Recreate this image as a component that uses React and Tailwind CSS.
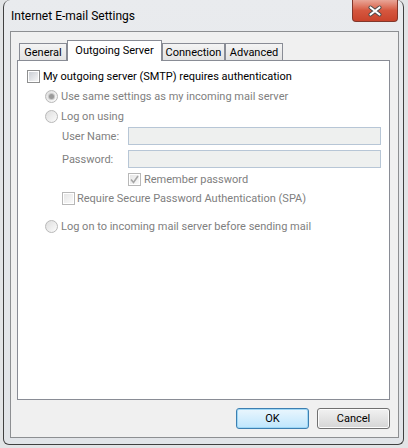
import React from 'react';

const font = { fontFamily: 'Roboto, "Liberation Sans", sans-serif' };

const CheckBox = ({ checked, disabled }) => (
  <span
    className={`flex h-[13px] w-[13px] shrink-0 items-center justify-center border ${
      disabled ? 'border-[#b8b8b8]' : 'border-[#8e8f8f]'
    } bg-white p-[1px]`}
  >
    <span
      className={`flex h-full w-full items-center justify-center ${
        disabled ? 'bg-gradient-to-br from-[#e6e6e6] to-[#fafafa]' : 'bg-gradient-to-br from-[#cbcfd5] to-[#f6f6f6]'
      }`}
    >
      {checked && (
        <svg width="9" height="9" viewBox="0 0 9 9">
          <path d="M1 4.5 L3.5 7.5 L8 1" fill="none" stroke="#a6a6a6" strokeWidth="1.6" />
        </svg>
      )}
    </span>
  </span>
);

const Radio = ({ checked }) => (
  <span className="flex h-[13px] w-[13px] shrink-0 items-center justify-center rounded-full border border-[#b9b9b9] bg-gradient-to-br from-[#dedede] to-[#fbfbfb]">
    {checked && <span className="h-[5px] w-[5px] rounded-full bg-[#9a9a9a] ring-1 ring-[#c9c9c9]" />}
  </span>
);

const Tab = ({ label, active, width }) =>
  active ? (
    <div className={`relative z-10 mb-[-1px] flex h-[21px] items-center justify-center border border-b-0 border-[#898c95] bg-white pb-[1px] text-black ${width}`}>
      {label}
    </div>
  ) : (
    <div className={`flex h-[17px] items-center justify-center border border-b-0 border-[#898c95] bg-gradient-to-b from-[#f4f4f4] to-[#e3e3e3] text-black ${width}`}>
      {label}
    </div>
  );

export default function App() {
  return (
    <div className="h-[448px] w-[408px] bg-[#e2e4e6] pl-[3px] text-[11px] leading-none" style={font}>
      <div className="flex h-[445px] w-[401px] flex-col rounded-[6px] rounded-t-[7px] border border-t-0 border-[#404040] bg-gradient-to-b from-[#e9ebee] to-[#e1e4e8]">
        {/* title bar */}
        <div className="flex h-[31px] items-start justify-between pl-[7px] pr-[5px]">
          <span className="mt-[10px] text-[12px] text-black">Internet E-mail Settings</span>
          <div className="flex h-[22px] w-[46px] items-center justify-center rounded-b-[4px] border border-t-0 border-[#82372b] bg-gradient-to-b from-[#e8a597] via-[#d5573f] to-[#c9432b]">
            <svg width="16" height="12" viewBox="0 0 16 12">
              <path d="M3.5 2.5 L12.5 9.5 M12.5 2.5 L3.5 9.5" stroke="#4a4a4a" strokeWidth="4" strokeLinecap="round" />
              <path d="M3.5 2.5 L12.5 9.5 M12.5 2.5 L3.5 9.5" stroke="#ffffff" strokeWidth="2.2" strokeLinecap="round" />
            </svg>
          </div>
        </div>

        {/* client area */}
        <div className="mb-[6px] ml-[6px] mr-[4px] flex flex-1 flex-col border border-[#8d8f92] bg-[#f0f0f0]">
          <div className="ml-[8px] mt-[8px] flex items-end">
            <Tab label="General" width="w-[48px]" />
            <Tab label="Outgoing Server" width="w-[95px]" active />
            <Tab label="Connection" width="w-[63px]" />
            <Tab label="Advanced" width="w-[58px]" />
          </div>

          <div className="ml-[6px] h-[340px] w-[373px] border border-[#898c95] bg-white pl-[9px] pt-[8px] text-[#808080]">
            <div className="flex h-[14px] items-center gap-[3px] text-black">
              <CheckBox />
              <span>My outgoing server (SMTP) requires authentication</span>
            </div>

            <div className="pl-[18px]">
              <div className="mt-[6px] flex h-[14px] items-center gap-[3px]">
                <Radio checked />
                <span>Use same settings as my incoming mail server</span>
              </div>
              <div className="mt-[6px] flex h-[14px] items-center gap-[3px]">
                <Radio />
                <span>Log on using</span>
              </div>

              <div className="pl-[17px]">
                <div className="mt-[4px] flex h-[18px] items-center">
                  <span className="w-[66px]">User Name:</span>
                  <span className="h-[18px] w-[253px] border border-[#b7c6d6] bg-[#eef0ef]" />
                </div>
                <div className="mt-[5px] flex h-[18px] items-center">
                  <span className="w-[66px]">Password:</span>
                  <span className="h-[18px] w-[253px] border border-[#b7c6d6] bg-[#eef0ef]" />
                </div>
                <div className="mt-[5px] flex h-[13px] items-center gap-[3px] pl-[66px]">
                  <CheckBox checked disabled />
                  <span>Remember password</span>
                </div>
                <div className="mt-[6px] flex h-[13px] items-center gap-[2px]">
                  <CheckBox disabled />
                  <span>Require Secure Password Authentication (SPA)</span>
                </div>
              </div>

              <div className="mt-[14px] flex h-[14px] items-center gap-[3px]">
                <Radio />
                <span>Log on to incoming mail server before sending mail</span>
              </div>
            </div>
          </div>

          <div className="mr-[8px] mt-[8px] flex justify-end gap-[8px]">
            <button className="flex h-[21px] w-[73px] items-center justify-center rounded-[3px] border border-[#3c7fb1] bg-gradient-to-b from-[#eaf6fd] to-[#bee6fd] text-black shadow-[inset_0_0_0_1px_#9fd7f5]">
              OK
            </button>
            <button className="flex h-[21px] w-[73px] items-center justify-center rounded-[3px] border border-[#707070] bg-gradient-to-b from-[#f2f2f2] to-[#d5d5d5] text-black shadow-[inset_0_0_0_1px_#fcfcfc]">
              Cancel
            </button>
          </div>
        </div>
      </div>
    </div>
  );
}
